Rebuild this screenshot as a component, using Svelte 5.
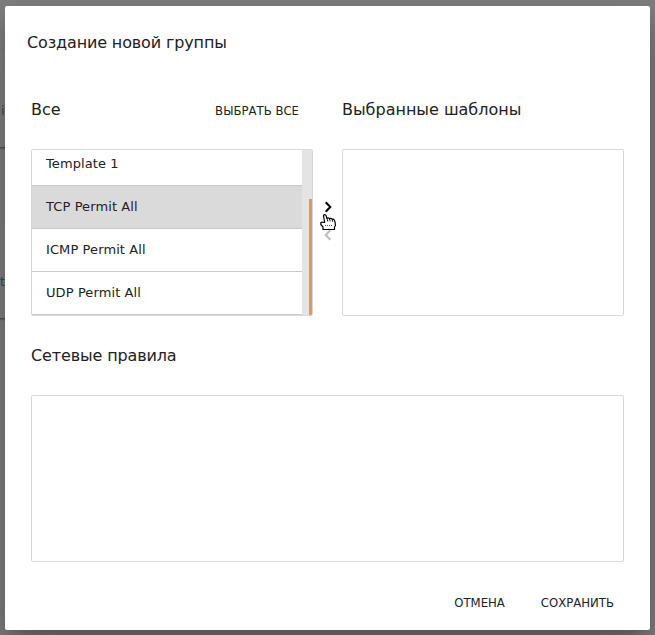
<script>
  const templates = ['Template 1', 'TCP Permit All', 'ICMP Permit All', 'UDP Permit All'];
  let selected = $state('TCP Permit All');
</script>

<div class="page">
  <div class="behind top">
    <span class="frag">it</span>
  </div>
  <div class="behind bottom">
    <span class="frag link">t</span>
  </div>

  <section class="dialog">
    <h2>Создание новой группы</h2>

    <div class="pickers">
      <div class="column">
        <header>
          <h3>Все</h3>
          <button class="action all">ВЫБРАТЬ ВСЕ</button>
        </header>
        <div class="box list">
          <div class="items">
            {#each templates as name}
              <button class="item" class:selected={name === selected} onclick={() => (selected = name)}>{name}</button>
            {/each}
          </div>
          <div class="track"><div class="thumb"></div></div>
        </div>
      </div>

      <div class="arrows">
        <svg class="arrow" width="8" height="12" viewBox="0 0 8 12"><path d="M1.7 1.2 6.3 6 1.7 10.8" /></svg>
        <svg class="arrow off" width="8" height="12" viewBox="0 0 8 12"><path d="M6.3 1.2 1.7 6l4.6 4.8" /></svg>
        <svg class="hand" width="17" height="17" viewBox="0 0 17 17">
          <path d="M3.500 1.800q0-1.200 1.200-1.200T6.200 1.800L7 4.500q1.200-1.200 2.500.2 1.400-.9 2.600.5 1.500-.5 2.200.8 1.200 2 1.200 5.500l-1 1.500v2.500H3V13L.8 10.500V8.600q1.200-1 3.200-.1h.7z" />
          <path class="thin" d="M7 4.500l.8 3M9.500 4.800l.7 2.700M12.200 5.300l.5 2.500" />
          <path class="dots" d="M5 11.500h8" />
        </svg>
      </div>

      <div class="column">
        <header><h3>Выбранные шаблоны</h3></header>
        <div class="box"></div>
      </div>
    </div>

    <h3 class="rules">Сетевые правила</h3>
    <div class="box"></div>

    <footer>
      <button class="action">ОТМЕНА</button>
      <button class="action">СОХРАНИТЬ</button>
    </footer>
  </section>
</div>

<style>
  .page {
    position: relative;
    box-sizing: border-box;
    width: 655px;
    height: 635px;
    padding: 6px 5px 5px;
    overflow: hidden;
    background: #808080;
    font-family: 'DejaVu Sans', sans-serif;
    color: #212121;
  }
  .behind {
    position: absolute;
    left: -10px;
    width: 16px;
    box-sizing: border-box;
    background: #838383;
    border-bottom: 1px solid #555;
    box-shadow: 0 1px 1px #686868;
  }
  .top { top: 51px; height: 97px; }
  .bottom { top: 223px; height: 96px; }
  .frag {
    position: absolute;
    left: 11px;
    top: 52px;
    font-size: 13px;
    line-height: 16px;
    color: #484848;
  }
  .link { left: 10px; top: 51px; font-size: 12px; color: #1f506c; }
  .dialog {
    position: relative;
    box-sizing: border-box;
    width: 645px;
    height: 624px;
    padding: 27px 26px 0;
    background: #fff;
    border-radius: 2px;
    box-shadow: 0 11px 15px -7px rgba(0, 0, 0, .2), 0 24px 38px 3px rgba(0, 0, 0, .14), 0 9px 46px 8px rgba(0, 0, 0, .12);
  }
  h2, h3 {
    margin: 0;
    font-size: 16px;
    line-height: 20px;
    font-weight: 400;
    white-space: nowrap;
  }
  h2 { margin-left: -4px; letter-spacing: -.14px; }
  button {
    margin: 0;
    padding: 0;
    border: 0;
    background: none;
    color: inherit;
    font: inherit;
    cursor: pointer;
  }
  .pickers { display: flex; margin-top: 47px; }
  .column { width: 282px; }
  header {
    display: flex;
    justify-content: space-between;
    height: 49px;
    align-items: flex-start;
  }
  .action {
    font-family: 'DejaVu Sans Condensed', 'DejaVu Sans', sans-serif;
    font-stretch: condensed;
    font-size: 13px;
    line-height: 22px;
    white-space: nowrap;
  }
  .all { margin-right: 14px; }
  .box {
    box-sizing: border-box;
    height: 167px;
    border: 1px solid #d9d9d9;
    border-radius: 2px;
  }
  .list { display: flex; overflow: hidden; }
  .items {
    flex: 1;
    display: flex;
    flex-direction: column;
    justify-content: flex-end;
    overflow: hidden;
  }
  .item {
    flex: none;
    box-sizing: border-box;
    height: 43px;
    padding: 0 14px;
    border-bottom: 1px solid #c9c9c9;
    font-size: 13px;
    line-height: 42px;
    letter-spacing: .1px;
    text-align: left;
  }
  .selected { background: #dadada; }
  .track {
    display: flex;
    align-items: flex-end;
    justify-content: flex-end;
    width: 10px;
    background: #e4e4e4;
  }
  .thumb { width: 3px; height: 116px; background: #ee8f6c; }
  .arrows {
    position: relative;
    display: flex;
    flex-direction: column;
    align-items: center;
    gap: 16px;
    width: 29px;
    padding-top: 101px;
    box-sizing: border-box;
  }
  .arrow { flex: none; fill: none; stroke: #000; stroke-width: 2; }
  .off { stroke: #bdbdbd; }
  .hand {
    position: absolute;
    left: 7px;
    top: 114px;
    fill: #fff;
    stroke: #000;
    stroke-width: 1.2;
    stroke-linejoin: round;
  }
  .thin { fill: none; stroke-width: .9; }
  .dots { stroke-width: 1; stroke: #555; stroke-dasharray: 1 1; }
  .rules { margin: 30px 0 29px; letter-spacing: -.13px; }
  footer {
    display: flex;
    justify-content: flex-end;
    gap: 36px;
    margin-top: 30px;
    padding-right: 10px;
  }
</style>
